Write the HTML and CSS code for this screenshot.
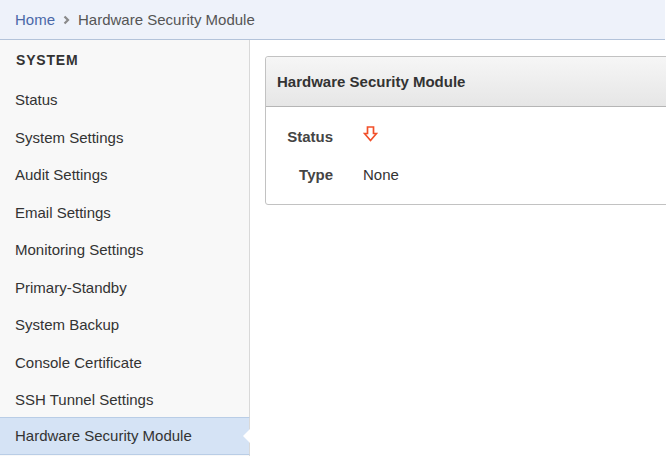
FILE: index.html
```html
<!DOCTYPE html>
<html>
<head>
<meta charset="utf-8">
<link rel="stylesheet" href="styles.css">
</head>
<body>
<div class="breadcrumb">
  <a class="crumb-link">Home</a>
  <span class="crumb-sep"><svg width="7" height="10" viewBox="0 0 7 10"><path d="M1.5 1.5 L5 5 L1.5 8.5" fill="none" stroke="#8a8a8a" stroke-width="2.2"/></svg></span>
  <span class="crumb-current">Hardware Security Module</span>
</div>
<div class="main">
  <nav class="sidebar">
    <div class="side-head">SYSTEM</div>
    <div class="side-item">Status</div>
    <div class="side-item">System Settings</div>
    <div class="side-item">Audit Settings</div>
    <div class="side-item">Email Settings</div>
    <div class="side-item">Monitoring Settings</div>
    <div class="side-item">Primary-Standby</div>
    <div class="side-item">System Backup</div>
    <div class="side-item">Console Certificate</div>
    <div class="side-item">SSH Tunnel Settings</div>
    <div class="side-item active">Hardware Security Module</div>
  </nav>
  <section class="content">
    <div class="panel">
      <div class="panel-head">Hardware Security Module</div>
      <div class="panel-body">
        <div class="label">Status</div>
        <div class="value"><svg class="arrow" width="15" height="16" viewBox="0 0 15 16"><path d="M4.5 1 H10.5 V7.5 H13.5 L7.5 14.5 L1.5 7.5 H4.5 Z" fill="#fff" stroke="#f2502a" stroke-width="1.7" stroke-linejoin="miter"/></svg></div>
        <div class="label">Type</div>
        <div class="value">None</div>
      </div>
    </div>
  </section>
</div>
</body>
</html>
```
FILE: styles.css
```css
html, body {
  margin: 0;
  padding: 0;
  overflow: hidden;
}
body {
  width: 666px;
  height: 456px;
  font-family: "Liberation Sans", Arial, sans-serif;
  font-size: 15px;
  color: #333;
  background: #fff;
}
.breadcrumb {
  height: 39px;
  box-sizing: content-box;
  border-bottom: 1px solid #b3c3da;
  background: #eef2fa;
  display: flex;
  align-items: center;
  padding-left: 15px;
  margin-right: 1px;
}
.crumb-link {
  color: #4a68a8;
}
.crumb-sep {
  display: inline-flex;
  margin: 0 8px 0 8px;
}
.crumb-current {
  color: #555;
}
.main {
  display: flex;
  height: 416px;
}
.sidebar {
  width: 249px;
  flex: none;
  background: #f8f8f8;
  border-right: 1px solid #d9d9d9;
}
.side-head {
  height: 41px;
  box-sizing: border-box;
  padding: 12px 16px 0;
  font-size: 14px;
  font-weight: bold;
  letter-spacing: 0.8px;
  color: #333;
}
.side-item {
  height: 37.5px;
  box-sizing: border-box;
  display: flex;
  align-items: center;
  padding: 0 15px;
  color: #333;
  position: relative;
}
.side-item.active {
  margin-top: -2px;
  height: 38px;
  background: #d5e3f5;
  border-top: 1px solid #b9cde6;
  border-bottom: 1px solid #b9cde6;
  margin-right: -1px;
  border-right: 1px solid #d9d9d9;
}
.side-item.active::after {
  content: "";
  position: absolute;
  right: -1px;
  top: 50%;
  margin-top: -7px;
  border-style: solid;
  border-width: 7px 7px 7px 0;
  border-color: transparent #fff transparent transparent;
}
.content {
  flex: 1;
  overflow: hidden;
  padding: 16px 0 0 15px;
}
.panel {
  margin-right: -30px;
  border: 1px solid #c2c2c2;
  border-radius: 3px;
  background: #fff;
}
.panel-head {
  height: 50px;
  box-sizing: border-box;
  display: flex;
  align-items: center;
  padding-left: 11px;
  font-weight: bold;
  color: #333;
  background: linear-gradient(#f6f6f6, #e6e6e6);
  border-bottom: 1px solid #b5b5b5;
  border-radius: 3px 3px 0 0;
}
.panel-body {
  display: grid;
  grid-template-columns: 67px auto;
  grid-auto-rows: 38px;
  column-gap: 30px;
  padding: 10px 0 11px;
  align-items: center;
  font-size: 15px;
}
.label {
  text-align: right;
  font-weight: bold;
  color: #444;
}
.value {
  display: flex;
  align-items: center;
  color: #333;
}
.arrow {
  margin-top: -5px;
}
```
